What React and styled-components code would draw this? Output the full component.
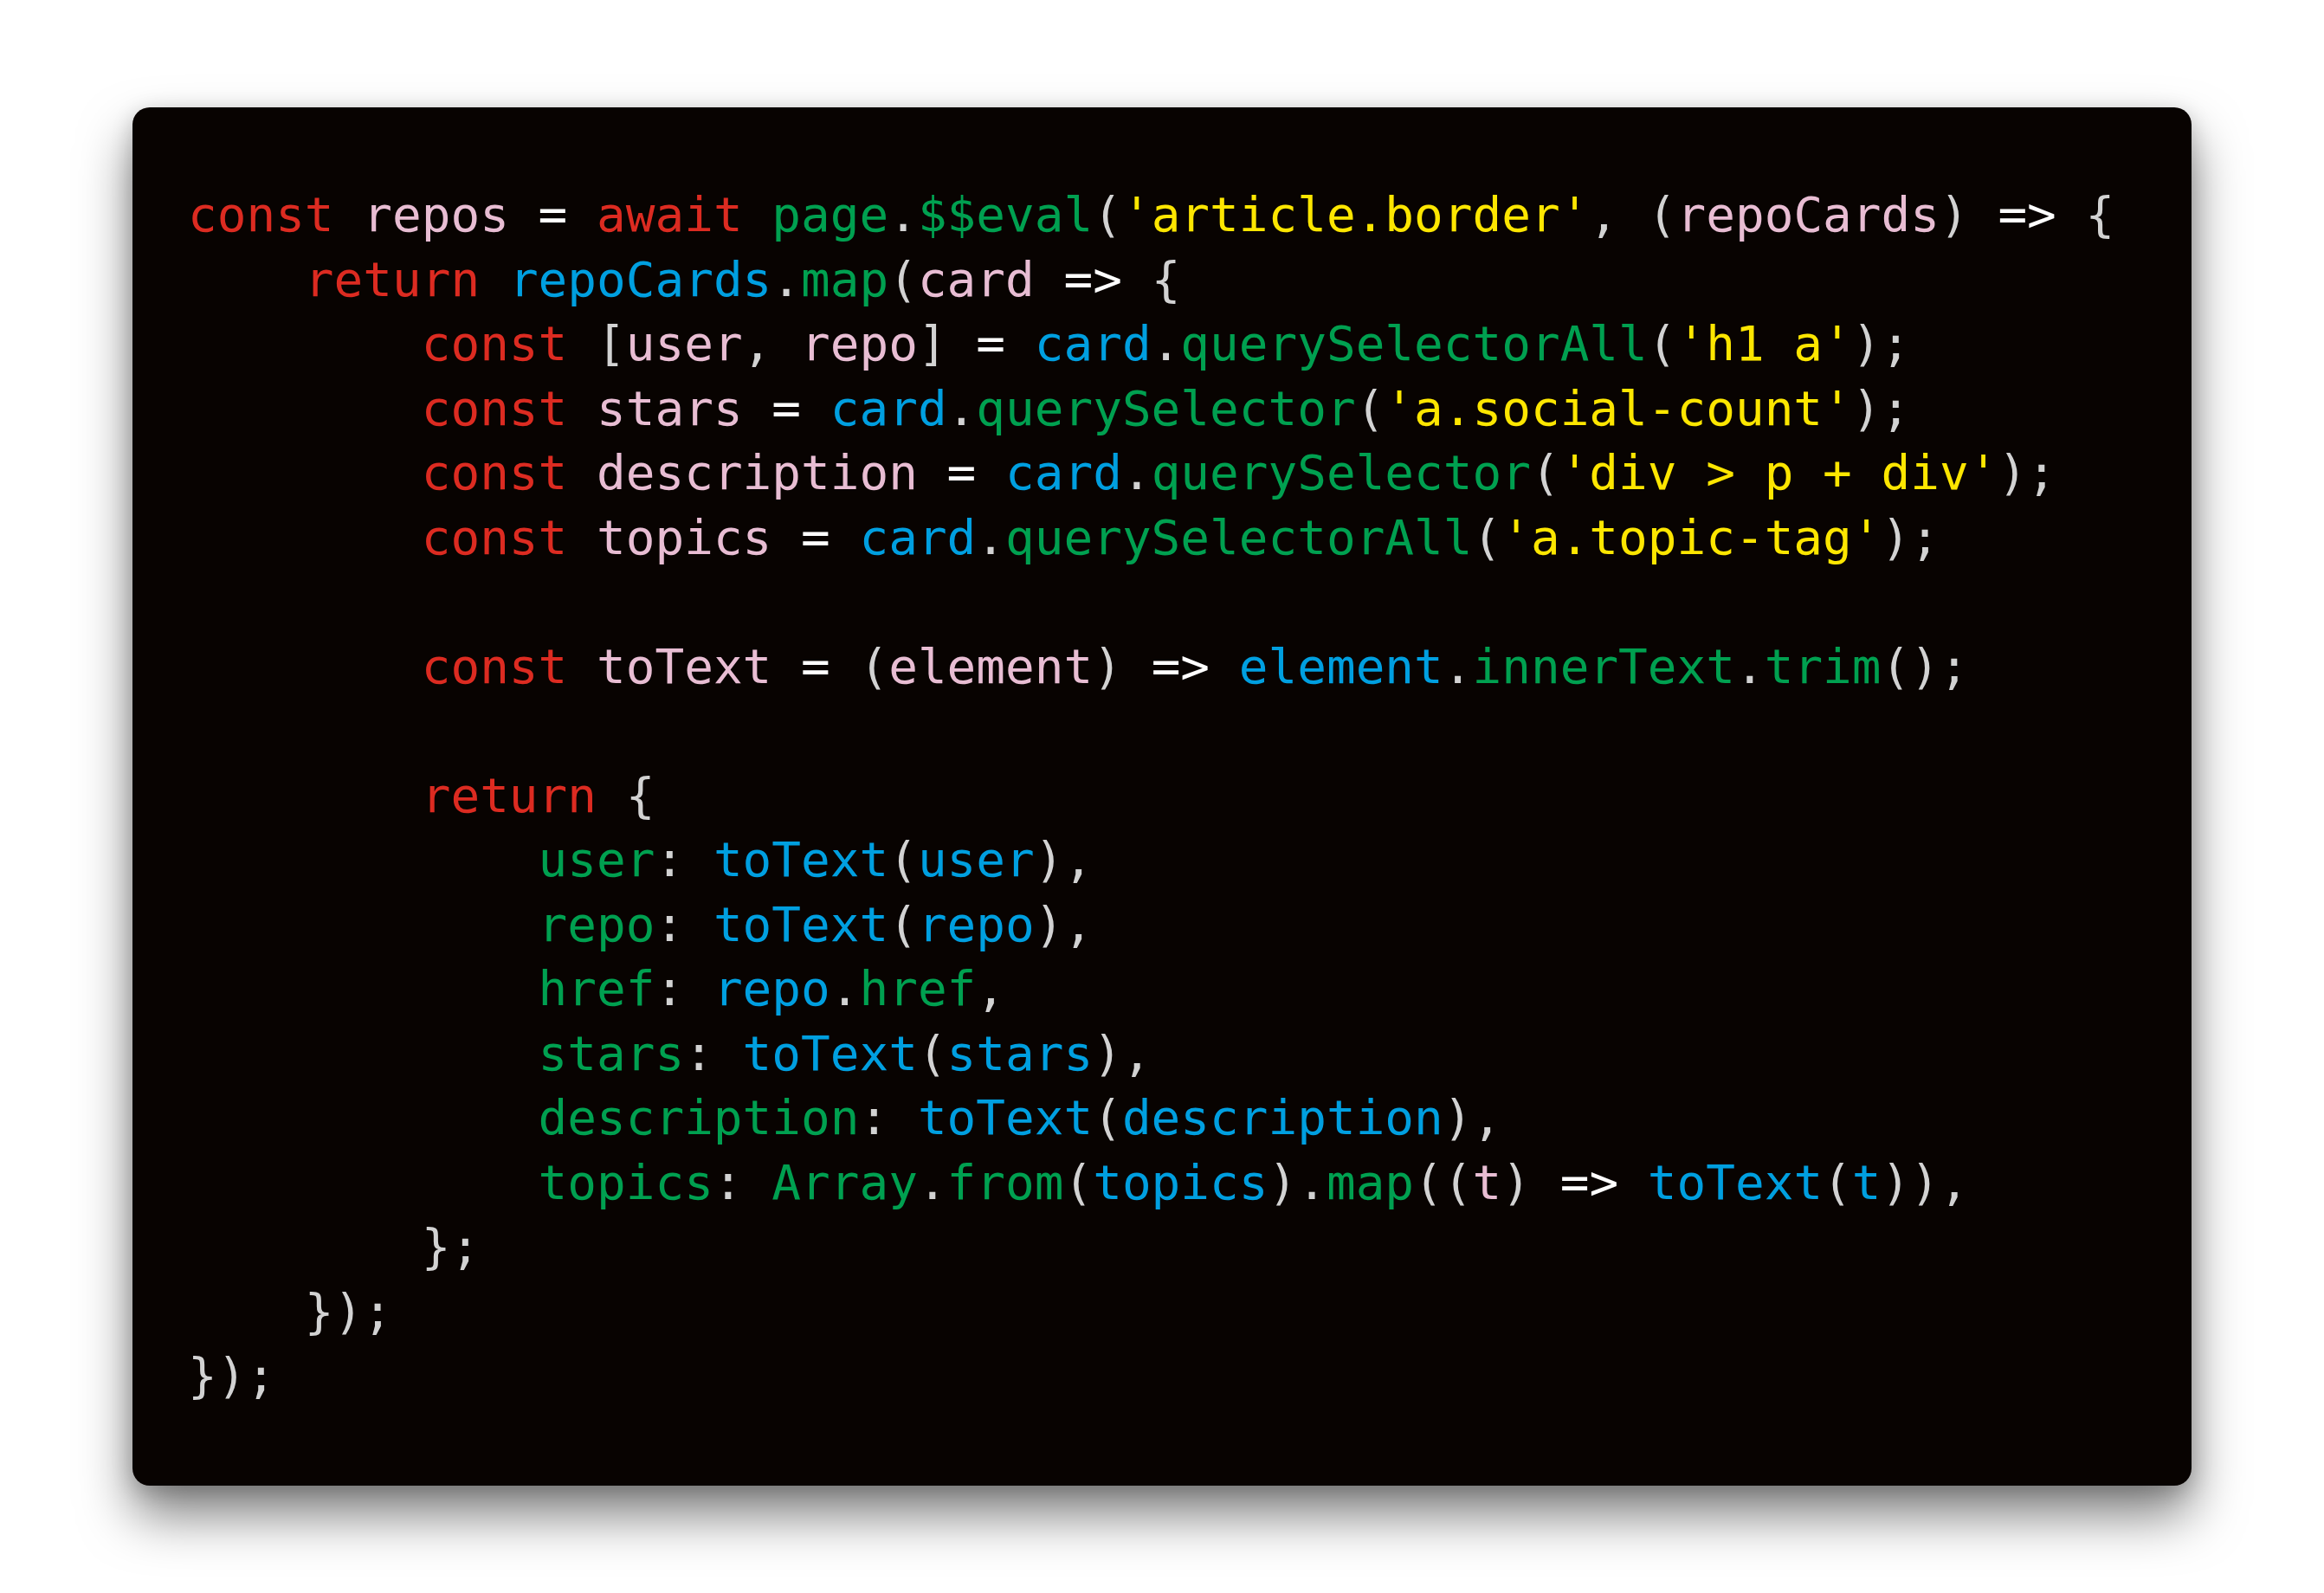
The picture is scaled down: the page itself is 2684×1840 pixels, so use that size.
import styled, { createGlobalStyle } from "styled-components";

const GlobalStyle = createGlobalStyle`
  html, body {
    margin: 0;
    padding: 0;
    background: #ffffff;
  }
`;

const colors = {
  kw: "#dc2b21",
  var: "#e8bdd3",
  op: "#ffffff",
  fn: "#00a050",
  id: "#009fe0",
  str: "#fde600",
  punc: "#d2d2d2",
};

// each line: indent level + list of [kind, text]
const lines = [
  [0, [["kw", "const"], ["punc", " "], ["var", "repos"], ["op", " = "], ["kw", "await"], ["punc", " "], ["fn", "page"], ["punc", "."], ["fn", "$$eval"], ["punc", "("], ["str", "'article.border'"], ["punc", ", ("], ["var", "repoCards"], ["punc", ")"], ["op", " => "], ["punc", "{"]]],
  [1, [["kw", "return"], ["punc", " "], ["id", "repoCards"], ["punc", "."], ["fn", "map"], ["punc", "("], ["var", "card"], ["op", " => "], ["punc", "{"]]],
  [2, [["kw", "const"], ["punc", " ["], ["var", "user"], ["punc", ", "], ["var", "repo"], ["punc", "]"], ["op", " = "], ["id", "card"], ["punc", "."], ["fn", "querySelectorAll"], ["punc", "("], ["str", "'h1 a'"], ["punc", ");"]]],
  [2, [["kw", "const"], ["punc", " "], ["var", "stars"], ["op", " = "], ["id", "card"], ["punc", "."], ["fn", "querySelector"], ["punc", "("], ["str", "'a.social-count'"], ["punc", ");"]]],
  [2, [["kw", "const"], ["punc", " "], ["var", "description"], ["op", " = "], ["id", "card"], ["punc", "."], ["fn", "querySelector"], ["punc", "("], ["str", "'div > p + div'"], ["punc", ");"]]],
  [2, [["kw", "const"], ["punc", " "], ["var", "topics"], ["op", " = "], ["id", "card"], ["punc", "."], ["fn", "querySelectorAll"], ["punc", "("], ["str", "'a.topic-tag'"], ["punc", ");"]]],
  [0, []],
  [2, [["kw", "const"], ["punc", " "], ["var", "toText"], ["op", " = "], ["punc", "("], ["var", "element"], ["punc", ")"], ["op", " => "], ["id", "element"], ["punc", "."], ["fn", "innerText"], ["punc", "."], ["fn", "trim"], ["punc", "();"]]],
  [0, []],
  [2, [["kw", "return"], ["punc", " {"]]],
  [3, [["fn", "user"], ["punc", ": "], ["id", "toText"], ["punc", "("], ["id", "user"], ["punc", "),"]]],
  [3, [["fn", "repo"], ["punc", ": "], ["id", "toText"], ["punc", "("], ["id", "repo"], ["punc", "),"]]],
  [3, [["fn", "href"], ["punc", ": "], ["id", "repo"], ["punc", "."], ["fn", "href"], ["punc", ","]]],
  [3, [["fn", "stars"], ["punc", ": "], ["id", "toText"], ["punc", "("], ["id", "stars"], ["punc", "),"]]],
  [3, [["fn", "description"], ["punc", ": "], ["id", "toText"], ["punc", "("], ["id", "description"], ["punc", "),"]]],
  [3, [["fn", "topics"], ["punc", ": "], ["fn", "Array"], ["punc", "."], ["fn", "from"], ["punc", "("], ["id", "topics"], ["punc", ")."], ["fn", "map"], ["punc", "(("], ["var", "t"], ["punc", ")"], ["op", " => "], ["id", "toText"], ["punc", "("], ["id", "t"], ["punc", ")),"]]],
  [2, [["punc", "};"]]],
  [1, [["punc", "});"]]],
  [0, [["punc", "});"]]],
];

export default function App() {
  return (
    <Page>
      <GlobalStyle />
      <Card>
        <Code>
          {lines.map(([indent, tokens], i) => (
            <Line key={i} $indent={indent}>
              {tokens.length === 0
                ? "\u00a0"
                : tokens.map(([kind, text], j) => (
                    <Token key={j} $kind={kind}>
                      {text}
                    </Token>
                  ))}
            </Line>
          ))}
        </Code>
      </Card>
    </Page>
  );
}

const Page = styled.div`
  display: flex;
  align-items: center;
  justify-content: center;
  width: 2684px;
  height: 1840px;
  background: #ffffff;
`;

const Card = styled.div`
  box-sizing: border-box;
  width: 2378px;
  height: 1592px;
  padding: 87px 64px 90px;
  background: #080301;
  border-radius: 20px;
  box-shadow: 0 34px 60px rgba(0, 0, 0, 0.5), 0 6px 24px rgba(0, 0, 0, 0.18);
`;

const Code = styled.pre`
  margin: 0;
  font-family: "DejaVu Sans Mono", "Liberation Mono", monospace;
  font-size: 56px;
  line-height: 74.5px;
  white-space: pre;
`;

const Line = styled.div`
  padding-left: ${(p) => p.$indent * 4}ch;
`;

const Token = styled.span`
  color: ${(p) => colors[p.$kind]};
`;
